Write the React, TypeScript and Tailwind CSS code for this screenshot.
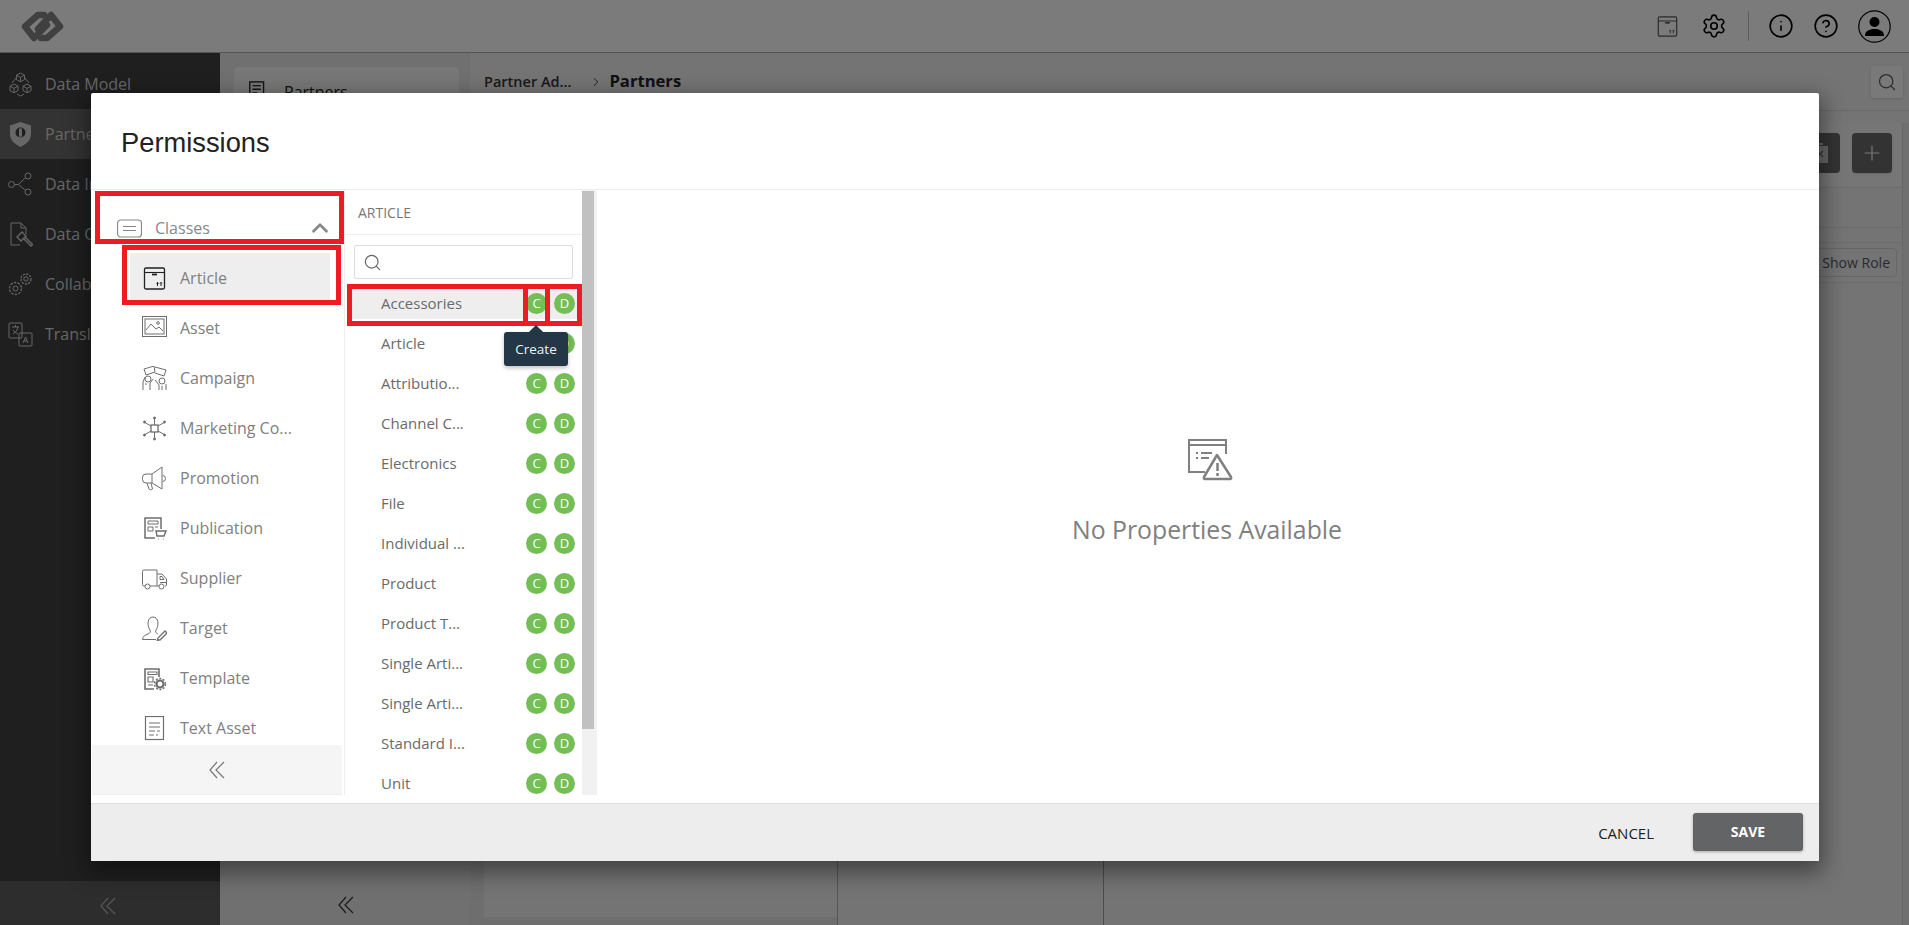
import type { ReactNode } from "react";
import { ChevronRight, ChevronUp, CircleHelp, Info, Plus, Search, Settings } from "lucide-react";

function Ico({ children, size = 25, className = "" }: { children: ReactNode; size?: number; className?: string }) {
  return (
    <svg viewBox="0 0 25 25" width={size} height={size} fill="none" stroke="currentColor" strokeWidth="1" className={className}>
      {children}
    </svg>
  );
}

function DoubleChevron({ className = "" }: { className?: string }) {
  return (
    <svg viewBox="0 0 16 18" width="16" height="18" fill="none" stroke="currentColor" strokeWidth="1.2" className={className}>
      <path d="M8 1 1 9l7 8M15 1 7 9l8 8" />
    </svg>
  );
}

const BoxIcon = ({ size = 25 }: { size?: number }) => (
  <Ico size={size}>
    <rect x="2.5" y="2" width="20" height="21" rx="1.5" strokeWidth="1.3" />
    <path d="M2.5 6.5h20" strokeWidth="1.1" />
    <path d="M10 8.5h5" strokeWidth="1.8" />
    <path d="M15.5 20v-3.5M19 20v-3.5M14.5 17.5l1-1.2 1 1.2M18 17.5l1-1.2 1 1.2" />
  </Ico>
);

const listIcons: Record<string, ReactNode> = {
  Asset: (
    <Ico>
      <rect x="0.5" y="0.5" width="24" height="20" />
      <rect x="3" y="3" width="19" height="15" />
      <path d="m4 14 5-6 5 5 3-2 4 4" />
      <circle cx="16" cy="7" r="1.3" />
    </Ico>
  ),
  Campaign: (
    <Ico>
      <path d="m2 3 10-3 1 6-9 3zM13 1l11 3-2 6-9-3" />
      <circle cx="6" cy="13" r="3" />
      <circle cx="20" cy="15" r="3" />
      <path d="M1 24v-8l2-5M3 18l2 0M8 24v-7l3-4M17 24v-5l-4-5M24 24v-6M20 24v-4" />
    </Ico>
  ),
  "Marketing Co...": (
    <Ico>
      <rect x="9" y="9" width="7" height="7" strokeWidth="1.3" />
      <path d="M12.5 2v7M12.5 16v7M2 6l7 4M16 15l7 4M23 6l-7 4M9 15l-7 4" />
      <circle cx="12.5" cy="2" r="1" fill="currentColor" />
      <circle cx="12.5" cy="23" r="1" fill="currentColor" />
      <circle cx="2.5" cy="6" r="1" fill="currentColor" />
      <circle cx="22.5" cy="6" r="1" fill="currentColor" />
      <circle cx="2.5" cy="19" r="1" fill="currentColor" />
      <circle cx="22.5" cy="19" r="1" fill="currentColor" />
    </Ico>
  ),
  Promotion: (
    <Ico>
      <path d="M20 1v22L10 17H4a3.500 3.500 0 0 1-3.500-3.500v-2A3.500 3.500 0 0 1 4 8h6zM10 8v9" />
      <path d="m5 17 2 6c.5 1 3 1 3.500 0L9 17M20.500 9.500a3 3 0 0 1 0 6" />
    </Ico>
  ),
  Publication: (
    <Ico>
      <path d="M19 13V2H3v20h10" strokeWidth="1.500" />
      <path d="M6 5h10v3H6zM6 11h5v4H6zM13 11h3" />
      <path d="M14 15h10l-2 5h-7zM16 23h.5M21 23h.5" strokeWidth="1.400" />
    </Ico>
  ),
  Supplier: (
    <Ico>
      <path d="M3 20H2a1.500 1.500 0 0 1-1.500-1.500v-13A1.500 1.500 0 0 1 2 4h13v16H8M15 8h5l4.500 5v6a1 1 0 0 1-1 1H23M15 20h2" />
      <path d="M18 10.500h2l2 3h-4zM18 16.500h6" />
      <circle cx="5.500" cy="20.500" r="2.500" />
      <circle cx="19.500" cy="20.500" r="2.500" />
    </Ico>
  ),
  Target: (
    <Ico>
      <path d="M8 14C5 10 5 1 11 1s6 9 3 13c-1 2 0 3 2 4M8 14c1 2 0 3-2 4-3 1-5 2-5.500 5.500H14" />
      <path d="m16 24-1 1 1-3 7-7 2 2-7 7z" strokeWidth="1.300" />
    </Ico>
  ),
  Template: (
    <Ico>
      <path d="M17 11V3H3v20h9" strokeWidth="1.600" />
      <path d="M6 6h9v2.500H6zM6 11h5v5H6zM6 19h5" strokeWidth="1.100" />
      <circle cx="18" cy="18" r="3.500" strokeWidth="2.200" />
      <circle cx="18" cy="18" r="5.500" strokeWidth="1.400" strokeDasharray="2 1.500" />
    </Ico>
  ),
  "Text Asset": (
    <Ico>
      <rect x="3.500" y="0.500" width="18" height="23" strokeWidth="1.200" />
      <path d="M7 7h11M7 11h11M7 15h6M15 15h3M7 19h5M14 19h2" />
    </Ico>
  ),
};

const sideItems: { label: string; icon: ReactNode; active?: boolean }[] = [
  {
    label: "Data Model",
    icon: (
      <Ico>
        <path d="m12.500 1 4 2.200v4.400l-4 2.200-4-2.200V3.200zM6 12l4 2.200v4.400l-4 2.200-4-2.200v-4.400zM19 12l4 2.200v4.400l-4 2.200-4-2.200v-4.400z" />
        <path d="M8.500 3.200l4 2.200 4-2.200M12.500 5.400v4.400M2 14.200l4 2.200 4-2.200M6 16.400v4.400M15 14.200l4 2.200 4-2.200M19 16.400v4.400M4 11l4-5M21 11l-4-5M9 22l3.500 2 3.500-2" />
      </Ico>
    ),
  },
  {
    label: "Partner Administration",
    active: true,
    icon: (
      <svg viewBox="0 0 25 25" width="25" height="25">
        <path d="M12.500 0 23 3.500V12c0 6-4.500 10-10.500 13C6.500 22 2 18 2 12V3.500z" fill="currentColor" />
        <circle cx="12.500" cy="10.500" r="5" fill="#3e3e3e" />
        <path d="M12.500 7.500v6" stroke="currentColor" strokeWidth="3" strokeLinecap="round" />
      </svg>
    ),
  },
  {
    label: "Data Integration",
    icon: (
      <Ico>
        <circle cx="3.500" cy="12.500" r="3" />
        <circle cx="20" cy="4" r="3" />
        <circle cx="20" cy="20" r="3" />
        <path d="M6.500 12.500h4l7-7M10.500 12.500l7 6" />
      </Ico>
    ),
  },
  {
    label: "Data Quality",
    icon: (
      <Ico>
        <path d="M12 23H3V1h10l5 5v6M13 1v5h5" />
        <path d="m9 15 5-5 4 4-5 5zM15 16l8 8 1.500-1.500-8-8" strokeWidth="1.300" />
      </Ico>
    ),
  },
  {
    label: "Collaboration",
    icon: (
      <Ico>
        <circle cx="7.500" cy="16.500" r="2.500" />
        <circle cx="7.500" cy="16.500" r="6" strokeDasharray="2.500 1.200" strokeWidth="1.300" />
        <circle cx="18" cy="7" r="2.200" />
        <circle cx="18" cy="7" r="5" strokeDasharray="2.200 1.100" strokeWidth="1.300" />
      </Ico>
    ),
  },
  {
    label: "Translation",
    icon: (
      <Ico>
        <rect x="1" y="1" width="13" height="15" rx="1" />
        <rect x="11" y="11" width="13" height="13" rx="1" />
        <path d="M4 5h7M7.500 3v2M10 5c-1 4-3 6-5 7M5 8c1 2 3 3 5 4" />
        <path d="m15 21 2.500-6 2.500 6M16 19h3" />
      </Ico>
    ),
  },
];

const classes = ["Asset", "Campaign", "Marketing Co...", "Promotion", "Publication", "Supplier", "Target", "Template", "Text Asset"];

const rows = [
  "Accessories",
  "Article",
  "Attributio...",
  "Channel C...",
  "Electronics",
  "File",
  "Individual ...",
  "Product",
  "Product T...",
  "Single Arti...",
  "Single Arti...",
  "Standard I...",
  "Unit",
];

function Badge({ letter }: { letter: string }) {
  return (
    <span className="flex h-[21px] w-[21px] items-center justify-center rounded-full bg-[#74bd57] text-[13px] leading-none text-white">
      {letter}
    </span>
  );
}

function PageBehind() {
  return (
    <div className="flex h-full flex-col text-[#222]">
      <header className="flex h-[53px] shrink-0 items-center border-b border-[#a8a8a8] bg-[#f7f7f7] pl-[20px] pr-[18px]">
        <svg viewBox="0 0 45 31" width="45" height="31" fill="none" stroke="#808080" strokeWidth="6.500" strokeLinejoin="round" strokeLinecap="round">
          <path d="M24 4h-6L5 15.500 14 27l13-13" />
          <path d="M21 27h6l13-11.500L31 4 18 18" />
        </svg>
        <div className="ml-auto flex items-center">
          <div className="text-[#555]">
            <BoxIcon size={23} />
          </div>
          <Settings size={26} strokeWidth={1.500} className="ml-[22px] text-black" />
          <div className="ml-[21px] h-[30px] w-px bg-[#bbb]" />
          <Info size={26} strokeWidth={1.500} className="ml-[19px] text-black" />
          <CircleHelp size={26} strokeWidth={1.500} className="ml-[19px] text-black" />
          <svg viewBox="0 0 33 33" width="33" height="33" className="ml-[19px]">
            <circle cx="16.500" cy="16.500" r="15.700" fill="none" stroke="#000" strokeWidth="1.200" />
            <circle cx="16.500" cy="12" r="5" fill="#000" />
            <path d="M7 26c0-5 4-7 9.500-7s9.500 2 9.500 7z" fill="#000" />
          </svg>
        </div>
      </header>
      <div className="flex min-h-0 flex-1">
        <aside className="flex w-[220px] shrink-0 flex-col bg-[#3e3e3e] text-[16px] text-[#cfcfcf]">
          <div className="flex-1 pt-[6px]">
            {sideItems.map((item) => (
              <div key={item.label} className={"flex h-[50px] items-center gap-[12px] pl-[8px] " + (item.active ? "bg-[#666]" : "")}>
                {item.icon}
                <span className="truncate">{item.label}</span>
              </div>
            ))}
          </div>
          <div className="flex h-[44px] items-center justify-center bg-[#5a5a5a] pr-[4px] pt-[5px] text-[#aaa]">
            <DoubleChevron />
          </div>
        </aside>
        <section className="flex w-[250px] shrink-0 flex-col bg-[#e0e0e0] pl-[14px] pr-[11px] pt-[14px]">
          <div className="flex h-[50px] items-center gap-[14px] rounded-t-[4px] bg-[#eeeeee] pl-[13px] text-[16px]">
            <Ico size={23}>
              <rect x="3" y="1" width="15" height="21" strokeWidth="1.500" />
              <path d="M6 5h9M6 9h9M6 13h5" strokeWidth="1.500" />
              <circle cx="18" cy="18" r="4" strokeWidth="1.500" />
            </Ico>
            <span>Partners</span>
          </div>
          <div className="mt-auto flex h-[44px] items-center justify-center pr-[2px] pt-[3px] text-[#333]">
            <DoubleChevron />
          </div>
        </section>
        <main className="flex min-w-0 flex-1 flex-col bg-[#e8e8e8]">
          <div className="flex h-[58px] shrink-0 items-center border-b border-[#d2d2d2] pl-[14px] pr-[6px]">
            <span className="text-[14.500px] font-semibold text-[#333]">Partner Ad...</span>
            <ChevronRight size={14} strokeWidth={1.500} className="ml-[18px]" />
            <span className="ml-[6px] text-[16.600px] font-bold">Partners</span>
            <div className="ml-auto flex h-[32px] w-[32px] items-center justify-center rounded-[2px] bg-[#f2f2f2] shadow-sm">
              <Search size={20} strokeWidth={1.500} className="text-[#555]" />
            </div>
          </div>
          <div className="flex min-h-0 flex-1 pt-[12px]">
            <div className="w-[14px] shrink-0 bg-[#dcdcdc]" />
            <div className="flex min-w-0 flex-1 flex-col">
              <div className="flex h-[65px] items-center justify-end gap-[12px] border-b border-[#d8d8d8] bg-[#ededed] pb-[5px] pr-[10px]">
                <div className="flex h-[40px] w-[40px] items-center justify-center rounded-[4px] bg-[#666]">
                  <svg viewBox="0 0 16 20" width="16" height="20" fill="#cfcfcf">
                    <path d="M0 3h16v17H0zM5 0h6v2H5z" />
                    <path d="m5 8 6 6M11 8l-6 6" stroke="#666" strokeWidth="1.200" />
                  </svg>
                </div>
                <div className="flex h-[40px] w-[40px] items-center justify-center rounded-[4px] bg-[#666] text-[#eee] shadow">
                  <Plus size={24} strokeWidth={1.200} />
                </div>
              </div>
              <div className="h-[40px] border-b border-[#d8d8d8]" />
              <div className="mt-[14px] flex h-[41px] items-center justify-end border-y border-[#d8d8d8] pr-[5px]">
                <div className="flex h-[29px] items-center rounded-[4px] border border-[#cfcfcf] px-[6px] text-[14px] text-[#555]">Show Role</div>
              </div>
              <div className="flex min-h-0 flex-1 flex-col">
                <div className="flex flex-1">
                  <div className="flex w-[353px] flex-col">
                    <div className="flex-1" />
                    <div className="h-[8px] bg-[#dcdcdc]" />
                  </div>
                  <div className="w-[266px] border-l border-[#aaa]" />
                  <div className="flex-1 border-l border-[#999]" />
                </div>
              </div>
            </div>
            <div className="w-[7px] shrink-0 border-l border-[#d2d2d2] bg-[#e0e0e0]" />
          </div>
        </main>
      </div>
    </div>
  );
}

function PermissionsModal() {
  return (
    <div className="flex h-[768px] w-[1728px] flex-col rounded-[2px] bg-white shadow-[0_8px_22px_4px_rgba(0,0,0,0.42)]">
      <div className="flex h-[97px] shrink-0 items-center border-b border-[#eeeeee] pl-[30px] pt-[4px] font-['Liberation_Sans',sans-serif] text-[27.300px] text-[#222]">
        Permissions
      </div>
      <div className="flex min-h-0 flex-1 pb-[8px]">
        <div className="flex w-[254px] shrink-0 flex-col border-r border-[#eeeeee] pl-px pr-[2px]">
          <div className="min-h-0 flex-1 overflow-hidden pt-[13px]">
            <div className="flex h-[50px] items-center pl-[25px] pr-[9px] text-[16px] text-[#888]">
              <Ico>
                <rect x="0.500" y="4" width="24" height="17" rx="3.500" strokeWidth="1.200" />
                <path d="M6 10.500h13M6 14.500h13" strokeWidth="1.200" />
              </Ico>
              <span className="ml-[13px]">Classes</span>
              <ChevronUp size={26} strokeWidth={2.500} className="ml-auto text-[#888]" />
            </div>
            <div className="mb-[3px] ml-[38px] flex h-[47px] w-[200px] items-center gap-[13px] bg-[#eeeeee] pl-[12px] pt-[3px] text-[16px] text-[#808080]">
              <div className="text-[#222]">
                <BoxIcon />
              </div>
              Article
            </div>
            {classes.map((name) => (
              <div key={name} className="ml-[38px] flex h-[50px] items-center gap-[13px] pl-[12px] text-[16px] text-[#808080]">
                <div className="text-[#6e6e6e]">{listIcons[name]}</div>
                {name}
              </div>
            ))}
          </div>
          <div className="flex h-[50px] shrink-0 items-center justify-center border-b border-[#eeeeee] bg-[#f5f5f5] text-[#777]">
            <DoubleChevron />
          </div>
        </div>
        <div className="flex w-[252px] shrink-0 border-r border-[#f2f2f2]">
          <div className="flex min-w-0 flex-1 flex-col overflow-hidden">
            <div className="flex h-[45px] shrink-0 items-center border-b border-[#eeeeee] pl-[13px] pt-px text-[14px] text-[#777]">ARTICLE</div>
            <div className="mx-[9px] mt-[10px] flex h-[34px] shrink-0 items-center rounded-[2px] border border-[#dddddd] pl-[8px]">
              <Search size={19} strokeWidth={1.500} className="text-[#666]" />
            </div>
            <div className="pt-[4px]">
              {rows.map((row, i) => (
                <div key={i} className="ml-[7px] mr-[5px] py-[4px]">
                  <div className={"flex h-[32px] items-center justify-between pl-[29px] pr-[2px] text-[15px] text-[#6a6a6a] " + (i === 0 ? "bg-[#eeeeee]" : "")}>
                    {row}
                    <div className="flex gap-[7px]">
                      <Badge letter="C" />
                      <Badge letter="D" />
                    </div>
                  </div>
                </div>
              ))}
            </div>
          </div>
          <div className="flex w-[14px] shrink-0 flex-col bg-[#f1f1f1] pr-[2px] pt-px">
            <div className="h-[538px] bg-[#c1c1c1]" />
          </div>
        </div>
        <div className="flex min-w-0 flex-1 flex-col items-center justify-center text-[#808080]">
          <svg viewBox="0 0 46 42" width="46" height="42" fill="none" stroke="#808080" className="ml-[6px]">
            <path d="M17 33H1V1h37v14" strokeWidth="2" />
            <path d="M1 6h37" strokeWidth="2" />
            <path d="M8 14h2M13 14h11M8 19h2M13 19h8" strokeWidth="2" />
            <path d="M29 16 16 38c-.5 1 0 2 1 2h25c1 0 1.500-1 1-2z" strokeWidth="2.500" strokeLinejoin="round" fill="#fff" />
            <path d="M29.500 24v8M29.500 34v3" strokeWidth="2.500" />
          </svg>
          <div className="mr-[2px] mt-[32px] text-[24.800px] leading-[33px]">No Properties Available</div>
        </div>
      </div>
      <div className="flex h-[58px] shrink-0 items-center justify-end border-t border-[#dddddd] bg-[#ededed] pr-[16px]">
        <button className="pt-[2px] text-[15px] font-medium text-[#222]">CANCEL</button>
        <button className="mb-[2px] ml-[39px] h-[38px] w-[110px] rounded-[3px] bg-[#636466] text-[14px] font-bold text-white shadow-[0_1px_3px_rgba(0,0,0,0.3)]">SAVE</button>
      </div>
    </div>
  );
}

export default function App() {
  return (
    <div className="relative h-[925px] w-[1909px] overflow-hidden font-['Open_Sans',sans-serif]">
      <PageBehind />
      <div className="absolute inset-0 flex justify-center bg-black/50 pl-[1px] pt-[93px]">
        <PermissionsModal />
      </div>

      {/* red annotations drawn over the screenshot */}
      <div className="absolute left-[95px] top-[191px] h-[53px] w-[249px] border-[5px] border-[#ed1c24]" />
      <div className="absolute left-[122px] top-[245px] h-[60px] w-[219px] border-[5px] border-[#ed1c24]" />
      <div className="absolute left-[347px] top-[284px] h-[42px] w-[181px] border-[5px] border-[#ed1c24]" />
      <div className="absolute left-[523px] top-[284px] h-[42px] w-[27px] border-[5px] border-[#ed1c24]" />
      <div className="absolute left-[545px] top-[284px] h-[42px] w-[37px] border-[5px] border-[#ed1c24]" />

      {/* tooltip */}
      <div className="absolute left-[504px] top-[332px] flex h-[34px] w-[64px] items-center justify-center rounded-[3px] bg-[#243746] text-[13.500px] font-medium text-[#eef2f4] shadow-[0_2px_4px_rgba(0,0,0,0.25)]">
        <div className="absolute left-[27px] top-[-5px] h-[10px] w-[10px] rotate-45 bg-[#243746]" />
        <span className="relative">Create</span>
      </div>
    </div>
  );
}
